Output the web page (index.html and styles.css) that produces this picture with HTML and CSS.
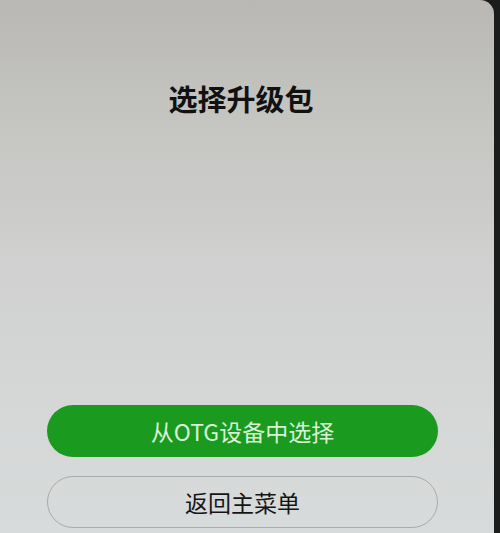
FILE: index.html
```html
<!DOCTYPE html>
<html lang="zh-CN">
<head>
<meta charset="utf-8">
<title>选择升级包</title>
<link rel="stylesheet" href="styles.css">
</head>
<body>
<div class="screen">
  <h1 class="title">选择升级包</h1>
  <div class="spacer"></div>
  <div class="actions">
    <button class="btn btn-primary">从OTG设备中选择</button>
    <button class="btn btn-secondary">返回主菜单</button>
  </div>
</div>
</body>
</html>
```
FILE: styles.css
```css
html, body {
  margin: 0;
  padding: 0;
  width: 500px;
  height: 533px;
  background: #1b1c1c;
  overflow: hidden;
}
.screen {
  width: 494px;
  height: 533px;
  box-sizing: border-box;
  border-top-right-radius: 14px;
  background: linear-gradient(180deg, #b9b8b4 0%, #c6c6c3 25%, #d0d1d0 50%, #d5d7d7 75%, #d8dbdb 100%);
  display: flex;
  flex-direction: column;
  font-family: "Noto Sans CJK SC", "Noto Sans", sans-serif;
  padding-top: 78px;
  padding-bottom: 5px;
}
.title {
  margin: 0;
  text-align: center;
  font-size: 29px;
  line-height: 40px;
  font-weight: 700;
  color: #111;
  padding-right: 12px;
}
.spacer {
  flex: 1;
}
.actions {
  display: flex;
  flex-direction: column;
  gap: 19px;
  margin: 0 56px 0 47px;
}
.btn {
  height: 52px;
  border-radius: 26px;
  font-family: "Noto Sans CJK SC", "Noto Sans", sans-serif;
  font-size: 23px;
  padding: 0;
  cursor: pointer;
}
.btn-primary {
  background: #1a9a1f;
  border: none;
  color: #d9f2d5;
}
.btn-secondary {
  background: transparent;
  border: 1px solid #a9abab;
  color: #151515;
}
```
